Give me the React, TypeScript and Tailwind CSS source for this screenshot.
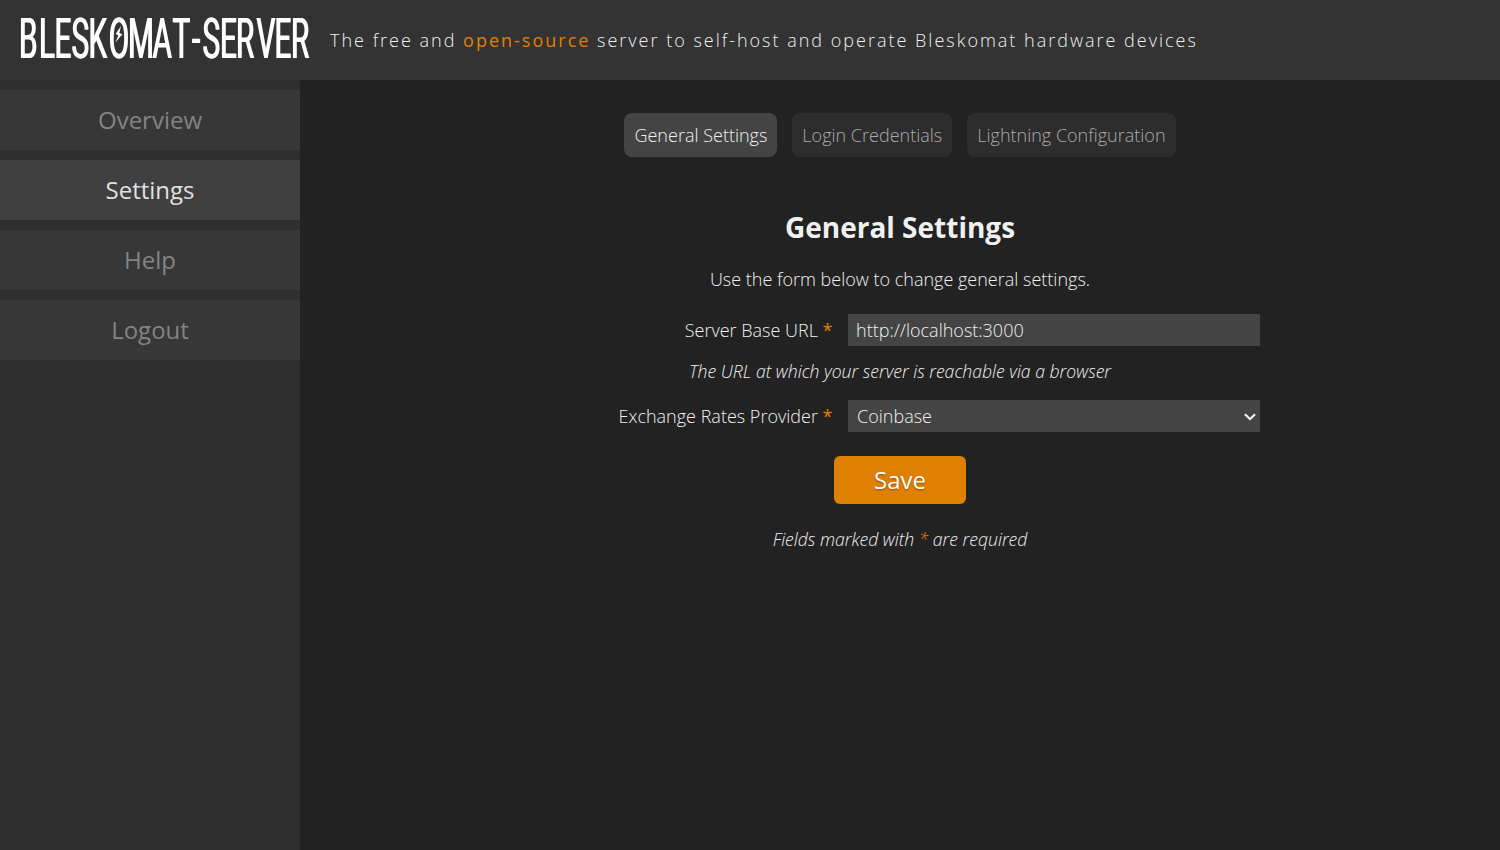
import React from "react";

// Left edge of every letter of the wordmark, in pixels.
const letterX = [-1.5, 18.5, 34, 51, 68, 88.2, 107.5, 132, 152, 171.5, 182, 199.5, 215.5, 236, 254, 270.5];
const SQUEEZE = 0.53;

function Logo() {
  return (
    <svg className="h-10 w-[290px] shrink-0 overflow-visible" viewBox="0 0 290 40" aria-label="Bleskomat-Server">
      <g className="[filter:drop-shadow(1px_0_0_#fff)]">
        <text
          y="40"
          x={letterX.map((x) => x / SQUEEZE).join(" ")}
          transform={`scale(${SQUEEZE} 1)`}
          fill="#fff"
          className="font-['Roboto',sans-serif] text-[56px] font-normal"
        >
          BLESKOMAT-SERVER
        </text>
      </g>
      <path d="M101 8 95.6 16 98.4 17.2 95.3 24.5 102.4 16.2 99.4 14.9Z" fill="#fff" />
    </svg>
  );
}

const nav = ["Overview", "Settings", "Help", "Logout"];
const tabs = ["General Settings", "Login Credentials", "Lightning Configuration"];

const Star = () => <span className="font-normal text-[#e08000]">*</span>;

export default function App() {
  return (
    <div className="flex h-[850px] w-full flex-col overflow-hidden bg-[#222] font-['Open_Sans',sans-serif] text-[18px] font-light text-[#f0f0f0]">
      <header className="flex h-20 shrink-0 items-center gap-5 bg-[#333] px-5 pb-1">
        <Logo />
        <p className="pt-1 tracking-[2px] whitespace-nowrap">
          The free and <a className="font-normal text-[#e08000]">open-source</a> server to self-host and operate Bleskomat hardware devices
        </p>
      </header>
      <div className="flex flex-1">
        <nav className="flex w-[300px] shrink-0 flex-col gap-2.5 bg-[#2f2f2f] pt-2.5 text-2xl font-normal">
          {nav.map((n) => (
            <a
              key={n}
              className={
                n === "Settings"
                  ? "flex h-[60px] items-center justify-center bg-[#3f3f3f] text-[#e0e0e0]"
                  : "flex h-[60px] items-center justify-center bg-[#373737] text-[#838383]"
              }
            >
              {n}
            </a>
          ))}
        </nav>
        <main className="flex flex-1 flex-col items-center pt-[33px]">
          <div className="flex gap-[15px]">
            {tabs.map((t, i) => (
              <a
                key={t}
                className={
                  i === 0
                    ? "flex h-11 items-center rounded-lg bg-[#444] px-2.5 text-[#f0f0f0]"
                    : "flex h-11 items-center rounded-lg bg-[#2d2d2d] px-2.5 text-[#aaa]"
                }
              >
                {t}
              </a>
            ))}
          </div>
          <h1 className="mt-[50px] text-[28px] leading-10 font-bold">General Settings</h1>
          <p className="mt-5 leading-6">Use the form below to change general settings.</p>
          <form className="flex w-[720px] flex-col items-center" onSubmit={(e) => e.preventDefault()}>
            <div className="mt-[23px] flex h-8 w-full items-center gap-[15.5px]">
              <label className="w-[292.5px] text-right">Server Base URL <Star /></label>
              <input className="h-8 w-[412px] bg-[#444] px-2 outline-none" defaultValue="http://localhost:3000" />
            </div>
            <p className="mt-[13px] text-[17.6px] leading-6 italic">The URL at which your server is reachable via a browser</p>
            <div className="mt-[17px] flex h-8 w-full items-center gap-[15.5px]">
              <label className="w-[292.5px] text-right">Exchange Rates Provider <Star /></label>
              <div className="relative h-8 w-[412px]">
                <select className="h-8 w-full appearance-none bg-[#444] px-[9px] outline-none" defaultValue="Coinbase">
                  <option>Coinbase</option>
                </select>
                <svg className="pointer-events-none absolute top-[13px] right-1 h-2 w-3" viewBox="0 0 12 8" fill="none" stroke="#fff" strokeWidth="2">
                  <path d="M1 1.2 6 6.2 11 1.2" />
                </svg>
              </div>
            </div>
            <button className="mt-6 h-12 w-[132px] rounded-md bg-[#e08000] text-2xl font-normal text-white [text-shadow:0_1px_2px_rgba(0,0,0,0.4)]">
              Save
            </button>
            <p className="mt-[23px] text-[17.6px] leading-6 italic">Fields marked with <span className="text-[#e08000]">*</span> are required</p>
          </form>
        </main>
      </div>
    </div>
  );
}
